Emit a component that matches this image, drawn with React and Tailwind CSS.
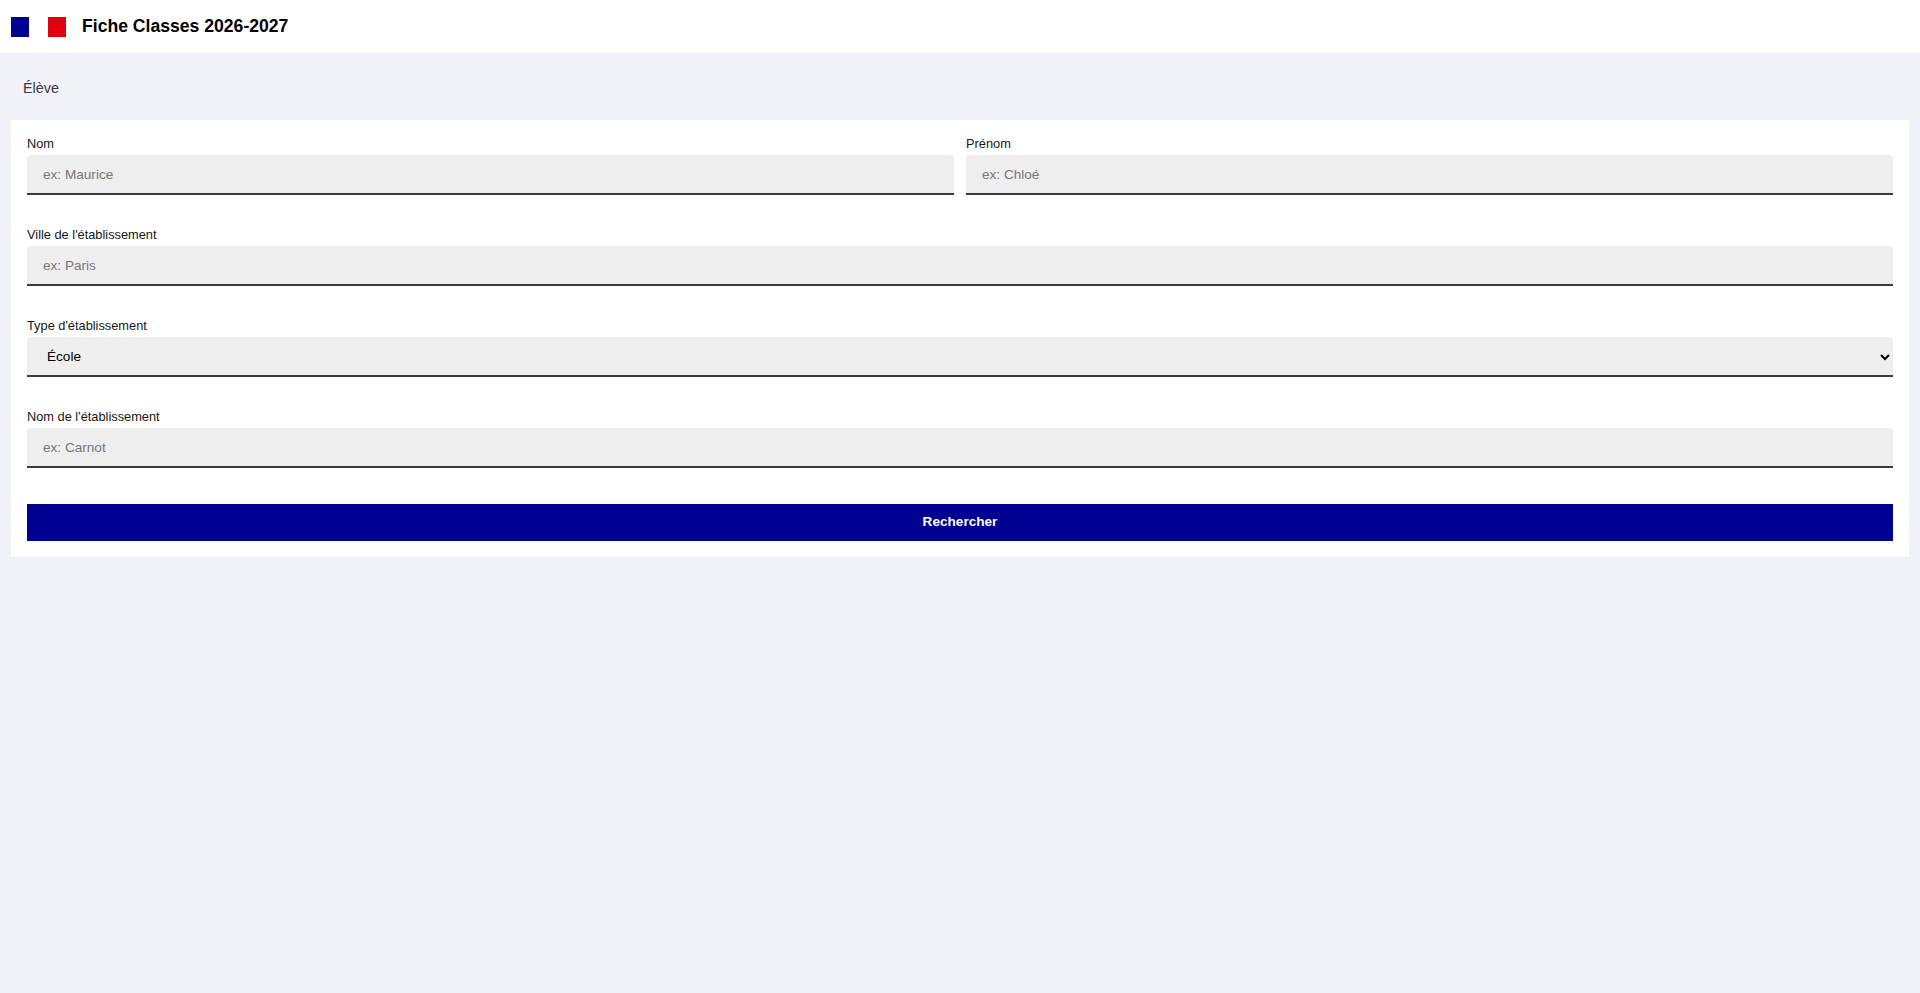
import React, { useState } from 'react';

const font = { fontFamily: '"Liberation Sans", Arial, sans-serif' };

const Field = ({ label, placeholder, value, onChange }) => (
  <div className="flex flex-col">
    <label className="text-[12.8px] leading-[15px] mb-[4px] text-[#161616]">{label}</label>
    <input
      type="text"
      value={value}
      onChange={onChange}
      placeholder={placeholder}
      className="h-[40px] w-full px-4 text-[13.6px] text-[#161616] bg-[#eeeeee] rounded-t-[4px] border-b-2 border-[#3a3a3a] outline-none placeholder:text-[#777777]"
    />
  </div>
);

const App = () => {
  const [form, setForm] = useState({ nom: '', prenom: '', ville: '', type: 'ecole', etab: '' });

  const set = (key) => (e) => setForm({ ...form, [key]: e.target.value });

  return (
    <div className="min-h-[993px] bg-[#f1f2f7]" style={font}>
      {/* Header */}
      <header className="h-[53px] bg-white flex items-center px-[11px]">
        <div className="w-[18px] h-[20px] bg-[#000091]" />
        <div className="w-[18px] h-[20px] bg-[#e1000f] ml-[19px]" />
        <h1 className="ml-[16px] text-[17.6px] font-bold text-[#000000]">Fiche Classes 2026-2027</h1>
      </header>

      <main className="px-[11px] pt-[25px]">
        <div className="pl-[12px] text-[14.4px] leading-[20px] text-[#3a3a3a] mb-[22px]">Élève</div>

        {/* Form card */}
        <div className="bg-white p-4 flex flex-col gap-8">
          <div className="grid grid-cols-2 gap-3">
            <Field label="Nom" placeholder="ex: Maurice" value={form.nom} onChange={set('nom')} />
            <Field label="Prénom" placeholder="ex: Chloé" value={form.prenom} onChange={set('prenom')} />
          </div>

          <Field label="Ville de l'établissement" placeholder="ex: Paris" value={form.ville} onChange={set('ville')} />

          <div className="flex flex-col">
            <label className="text-[12.8px] leading-[15px] mb-[4px] text-[#161616]">Type d'établissement</label>
            <select
              value={form.type}
              onChange={set('type')}
              className="h-[40px] w-full pl-4 pr-2 text-[13.6px] text-[#000000] bg-[#eeeeee] rounded-t-[4px] border-b-2 border-[#3a3a3a] outline-none"
            >
              <option value="ecole">École</option>
              <option value="college">Collège</option>
              <option value="lycee">Lycée</option>
            </select>
          </div>

          <Field label="Nom de l'établissement" placeholder="ex: Carnot" value={form.etab} onChange={set('etab')} />

          <button className="h-[37px] mt-[4px] w-full bg-[#000091] text-white text-[13.6px] font-bold">
            Rechercher
          </button>
        </div>
      </main>
    </div>
  );
};

export default App;
